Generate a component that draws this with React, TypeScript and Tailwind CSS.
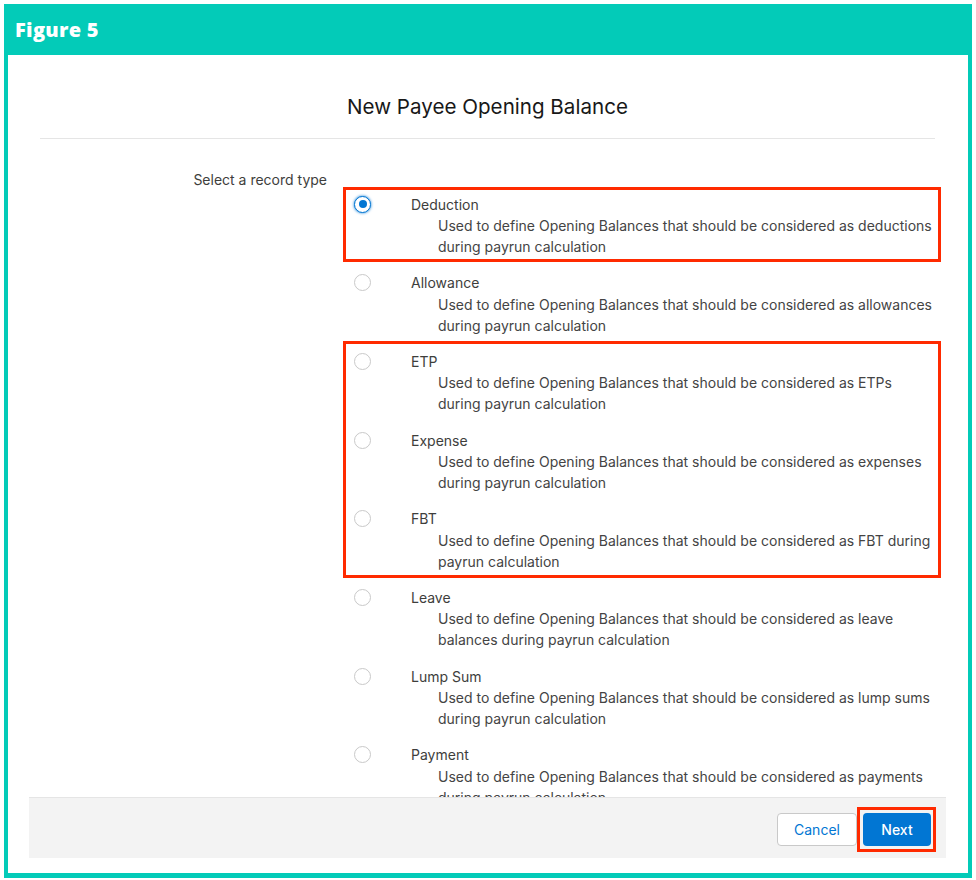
import React from 'react'

interface RecordType {
  name: string
  lines: [string, string]
}

const base = 'Used to define Opening Balances that should be considered as'

const recordTypes: RecordType[] = [
  { name: 'Deduction', lines: [`${base} deductions`, 'during payrun calculation'] },
  { name: 'Allowance', lines: [`${base} allowances`, 'during payrun calculation'] },
  { name: 'ETP', lines: [`${base} ETPs`, 'during payrun calculation'] },
  { name: 'Expense', lines: [`${base} expenses`, 'during payrun calculation'] },
  { name: 'FBT', lines: [`${base} FBT during`, 'payrun calculation'] },
  { name: 'Leave', lines: [`${base} leave`, 'balances during payrun calculation'] },
  { name: 'Lump Sum', lines: [`${base} lump sums`, 'during payrun calculation'] },
  { name: 'Payment', lines: [`${base} payments`, 'during payrun calculation'] },
]

function Radio({ checked }: { checked: boolean }) {
  if (checked) {
    return (
      <span className="w-[17px] h-[17px] rounded-full border border-[#0176d3] bg-white flex items-center justify-center shadow-[0_0_3px_#0176d3] flex-shrink-0">
        <span className="w-[8px] h-[8px] rounded-full bg-[#0176d3]" />
      </span>
    )
  }
  return <span className="w-[17px] h-[17px] rounded-full border border-[#c9c9c9] bg-white flex-shrink-0" />
}

export default function App() {
  const selected = 'Deduction'

  return (
    <div className="w-[976px] h-[880px] bg-white pl-[4px] pt-[4px] font-['Inter',sans-serif]">
      <div className="w-[968px] h-[874px] bg-[#03cbb8] flex flex-col">
        {/* Figure header */}
        <div className="h-[51px] flex items-center px-[11px] text-white text-[20px] font-extrabold font-['Open_Sans',sans-serif] tracking-[0.3px]">
          Figure 5
        </div>

        <div className="flex-1 mx-[4px] mb-[5px] bg-white">
          <div className="ml-[21px] w-[917px] h-[803px] flex flex-col">
            {/* Modal body (scrolled, clipped by footer) */}
            <div className="h-[742px] overflow-hidden">
              <h2 className="pt-[38px] text-center text-[20.6px] leading-[28px] text-[#181818]">
                New Payee Opening Balance
              </h2>
              <div className="mx-[11px] mt-[17px] border-t border-[#e5e5e5]" />

              <div className="flex mt-[31px]">
                <div className="w-[298px] flex-shrink-0 text-right text-[14px] leading-[20px] text-[#3e3e3c]">
                  Select a record type
                </div>
                <div className="relative flex-1 pt-[23px]">
                  {recordTypes.map(rt => (
                    <div key={rt.name} className="h-[78.7px]">
                      <div className="flex items-center h-[22px] pl-[27px]">
                        <Radio checked={rt.name === selected} />
                        <span className="ml-[40px] text-[14px] text-[#3e3e3c]">{rt.name}</span>
                      </div>
                      <div className="pl-[111px] text-[14px] leading-[21px] text-[#444444] whitespace-nowrap">
                        <div>{rt.lines[0]}</div>
                        <div>{rt.lines[1]}</div>
                      </div>
                    </div>
                  ))}

                  {/* annotation boxes */}
                  <div className="absolute left-[16px] top-[17px] w-[598px] h-[75px] border-[3px] border-[#ff2a00]" />
                  <div className="absolute left-[16px] top-[171px] w-[598px] h-[237px] border-[3px] border-[#ff2a00]" />
                </div>
              </div>
            </div>

            {/* Footer */}
            <div className="h-[61px] bg-[#f3f3f3] border-t border-[#e5e5e5] flex justify-end items-start pt-[15px] pr-[15px] gap-[6px]">
              <button className="h-[33px] w-[80px] rounded-[4px] bg-white border border-[#c9c9c9] text-[#0176d3] text-[14px]">
                Cancel
              </button>
              <div className="relative">
                <button className="h-[33px] w-[68px] rounded-[4px] bg-[#0176d3] text-white text-[14px] font-medium">
                  Next
                </button>
                <div className="absolute -left-[6px] -right-[5px] -top-[6px] -bottom-[6px] border-[3px] border-[#ff2a00]" />
              </div>
            </div>
          </div>
        </div>
      </div>
    </div>
  )
}
